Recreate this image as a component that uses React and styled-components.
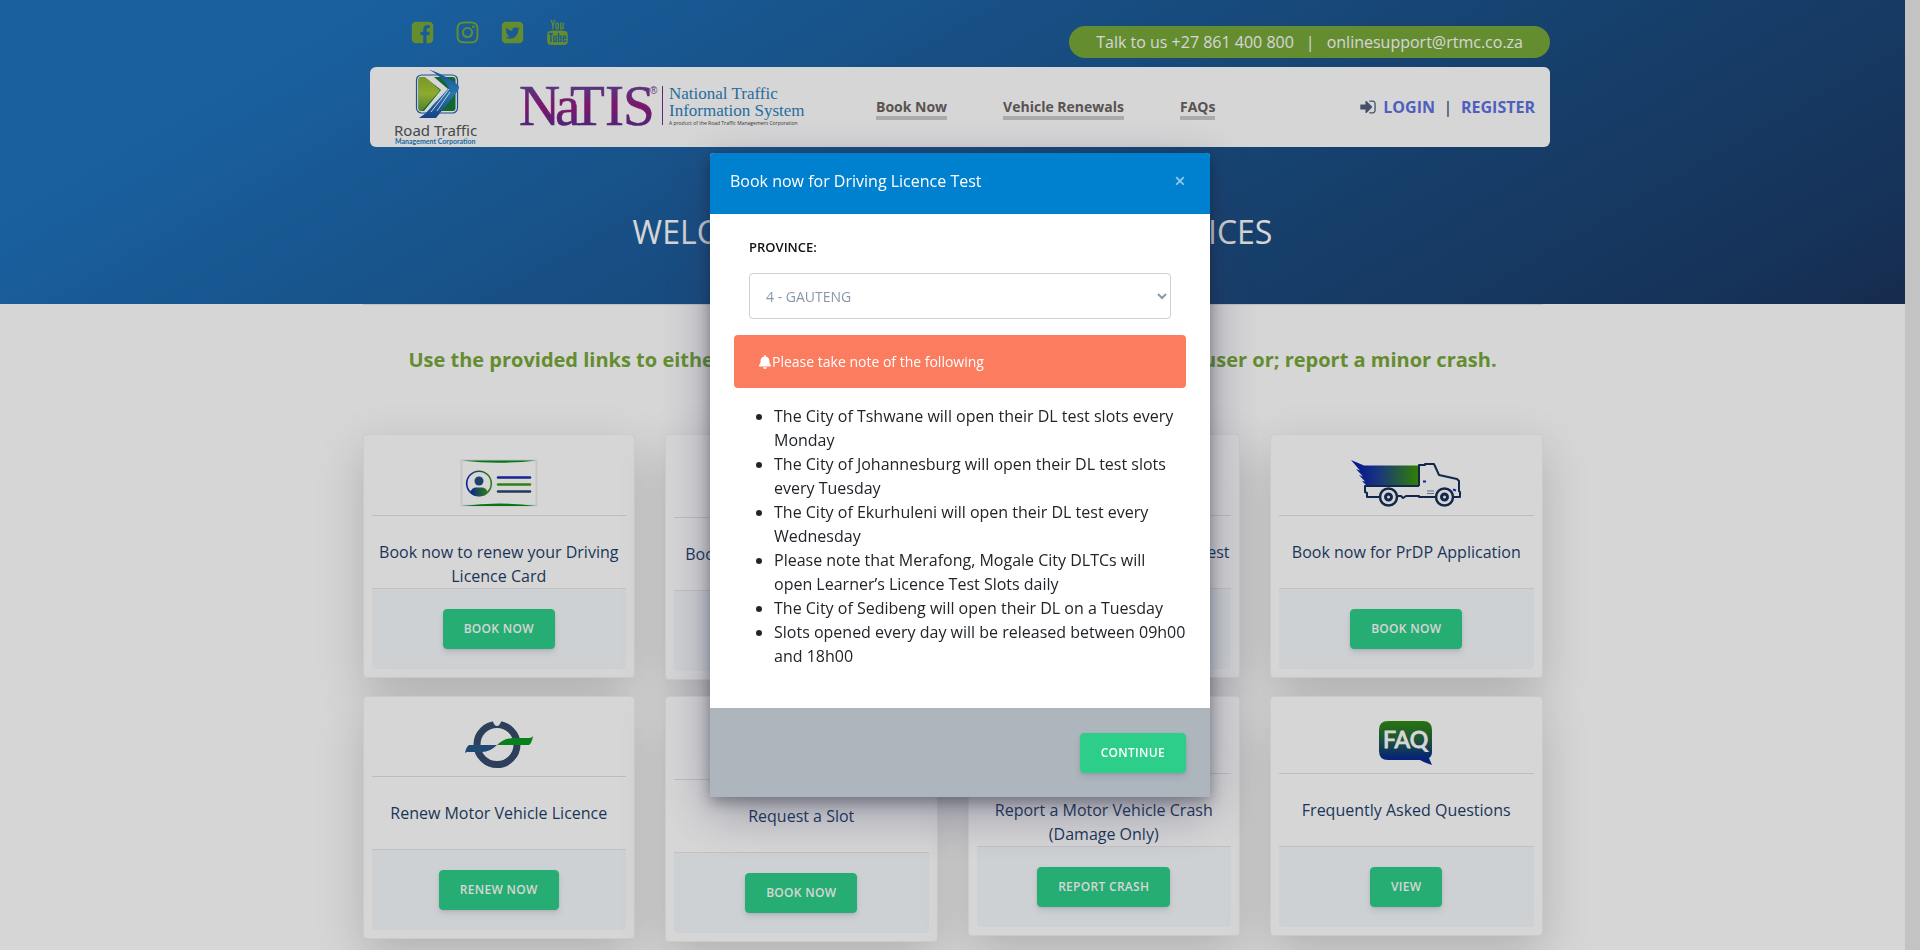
import React from "react";
import styled, { createGlobalStyle } from "styled-components";
import { FaInstagram, FaBell } from "react-icons/fa";
import { TfiYoutube } from "react-icons/tfi";

const GlobalStyle = createGlobalStyle`
  *, *::before, *::after { box-sizing: border-box; }
  body {
    margin: 0;
    overflow: hidden;
    background: #e9e9e9;
    font-family: "Open Sans", sans-serif;
    font-size: 16px;
    line-height: 24px;
    color: #525f7f;
  }
  button, select, input { font-family: inherit; }
`;

/* ---------- page ---------- */

const gutter = 15;

const Page = styled.div`
  height: 100vh;
  overflow: hidden;
  padding-right: ${gutter}px;
`;

const Sheet = styled.div`
  min-height: 100vh;
  background: #fff;
`;

const Hero = styled.header`
  height: 304px;
  background: linear-gradient(150deg, #1e73be 15%, #1b4b7f 70%, #1b3e6c 90%, #1b345d 100%);
`;

const HeaderWrap = styled.div`
  width: calc(100% + ${gutter}px);
`;

const HeaderInner = styled.div`
  max-width: 1180px;
  margin: 0 auto;
`;

const TopRow = styled.div`
  display: flex;
  justify-content: space-between;
  height: 67px;
  padding: 20px 0 0 40px;
`;

const SocialList = styled.nav`
  display: flex;
  gap: 20px;
  height: 25px;
`;

const SocialLink = styled.a`
  display: flex;
  color: #77a839;

  svg {
    width: 25px;
    height: 25px;
    fill: currentColor;
  }
`;

const ContactPill = styled.p`
  display: flex;
  align-items: center;
  gap: 12px;
  height: 32px;
  margin: 6px 0 0;
  padding: 0 27px;
  border-radius: 16px;
  background: #77a839;
  color: #fff;
`;

const NavBar = styled.div`
  display: flex;
  align-items: center;
  height: 80px;
  padding: 0 15px 0 22px;
  border-radius: 6px;
  background: #fff;
`;

const LogoLink = styled.a`
  display: flex;
  margin-right: ${(p) => p.$after}px;
`;

const NavLinks = styled.nav`
  display: flex;
  gap: 56px;
  padding-top: 4px;
`;

const NavLink = styled.a`
  border-bottom: 4px solid #cbcbcb;
  color: #6b6363;
  font-size: 14px;
  font-weight: 700;
  line-height: 18px;
  text-decoration: none;
`;

const Account = styled.div`
  display: flex;
  align-items: center;
  margin-left: auto;
  color: #525f7f;
  font-weight: 600;

  svg {
    width: 18px;
    height: 18px;
    margin-right: 6px;
    fill: currentColor;
  }
`;

const AccountLink = styled.a`
  color: #5e72e4;
  font-weight: 700;
  text-decoration: none;
`;

const Divider = styled.span`
  width: 26px;
  text-align: center;
`;

const HeroTitle = styled.h1`
  margin: 64px 0 0;
  color: #fff;
  font-size: 32px;
  font-weight: 400;
  line-height: 42px;
  text-align: center;
`;

const Container = styled.main`
  max-width: 1210px;
  margin: 0 auto;
  padding: 0 15px;
`;

const Intro = styled.h2`
  margin: 0 0 59px;
  padding-top: 40px;
  border-top: 1px solid #e4e4e4;
  color: #77a839;
  font-size: 20px;
  font-weight: 700;
  line-height: 30px;
  text-align: center;
  white-space: nowrap;
`;

const Grid = styled.div`
  display: grid;
  grid-template-columns: repeat(4, 1fr);
  align-items: start;
  gap: 16px 30px;
`;

const Card = styled.article`
  padding: 8px;
  border: 1px solid rgba(0, 0, 0, 0.05);
  border-radius: 4px;
  background: #fff;
  background-clip: border-box;
  box-shadow: 0 16px 48px rgba(0, 0, 0, 0.175);
  text-align: center;
`;

const CardIcon = styled.div`
  display: flex;
  justify-content: center;
  padding: 16px 0 8px;
  border-bottom: 1px solid #e2e2e2;
`;

const CardTitle = styled.h3`
  height: 72px;
  margin: 0;
  padding-top: 24px;
  color: #1f3f6b;
  font-size: 16px;
  font-weight: 400;
  line-height: 24px;
`;

const CardFooter = styled.div`
  padding: 20px;
  border-top: 1px solid #e6e6ea;
  border-radius: 0 0 4px 4px;
  background: #f6f9fc;
`;

const Button = styled.button`
  height: 40px;
  padding: 0 20px;
  border: 1px solid #2dce89;
  border-radius: 4px;
  background: #2dce89;
  box-shadow: 0 4px 6px rgba(50, 50, 93, 0.11), 0 1px 3px rgba(0, 0, 0, 0.08);
  color: #fff;
  font-size: 12px;
  font-weight: 600;
  line-height: 18px;
  letter-spacing: 0.025em;
  text-transform: uppercase;
  vertical-align: top;
`;

/* ---------- modal ---------- */

const Backdrop = styled.div`
  position: fixed;
  inset: 0;
  display: flex;
  align-items: center;
  justify-content: center;
  background: rgba(0, 0, 0, 0.16);
`;

const Modal = styled.section`
  width: 500px;
  max-width: 100%;
  border-radius: 4px 4px 0 0;
  background: #fff;
  box-shadow: 0 15px 50px rgba(50, 50, 93, 0.4), 0 5px 15px rgba(0, 0, 0, 0.35);
`;

const ModalHeader = styled.div`
  display: flex;
  align-items: flex-start;
  justify-content: space-between;
  height: 61px;
  padding: 16px 24px 0 20px;
  border-radius: 4px 4px 0 0;
  background: #0081cf;
`;

const ModalTitle = styled.h2`
  margin: 0;
  color: #fff;
  font-size: 16px;
  font-weight: 400;
  line-height: 24px;
`;

const CloseButton = styled.button`
  width: 12px;
  height: 24px;
  padding: 0;
  border: 0;
  background: none;
  color: #8cc8ec;
  font-size: 20px;
  font-weight: 600;
  line-height: 24px;
`;

const ModalBody = styled.div`
  padding: 24px;
`;

const Field = styled.div`
  margin-bottom: 16px;
  padding: 0 15px;
`;

const Label = styled.label`
  display: block;
  margin-bottom: 17px;
  color: #111;
  font-size: 13px;
  font-weight: 600;
  line-height: 18px;
`;

const Select = styled.select`
  display: block;
  width: 100%;
  height: 46px;
  padding: 10px 12px;
  border: 1px solid #cad1d7;
  border-radius: 4px;
  background: #fff;
  color: #8898aa;
  font-size: 14px;
`;

const Alert = styled.p`
  display: flex;
  align-items: center;
  height: 53px;
  margin: 0 0 16px;
  padding: 0 24px;
  border-radius: 4px;
  background: #fc7c5f;
  color: #fff;
  font-size: 14px;

  svg {
    width: 14px;
    height: 14px;
  }
`;

const Notes = styled.ul`
  margin: 0 0 16px;
  padding-left: 40px;
  color: #212529;
`;

const ModalFooter = styled.div`
  display: flex;
  justify-content: flex-end;
  padding: 24px;
  border-top: 1px solid #aab2ba;
  background: #adb5bd;
`;

/* ---------- drawings ---------- */

const FacebookIcon = () => (
  <svg viewBox="0 0 1792 1792" aria-hidden="true">
    <path d="M1376 128q119 0 203.5 84.5t84.5 203.5v960q0 119-84.5 203.5t-203.5 84.5h-188v-595h199l30-232h-229v-148q0-56 23.5-84t91.5-28l122-1v-207q-63-9-178-9-136 0-217.5 80t-81.5 226v171h-200v232h200v595h-532q-119 0-203.5-84.5t-84.5-203.5v-960q0-119 84.5-203.5t203.5-84.5h960z" />
  </svg>
);

const TwitterIcon = () => (
  <svg viewBox="0 0 1792 1792" aria-hidden="true">
    <path d="M1408 610q-56 25-121 34 68-40 93-117-65 38-134 51-61-66-153-66-87 0-148.5 61.5t-61.5 148.5q0 29 5 48-129-7-242-65t-192-155q-29 50-29 106 0 114 91 175-47-1-100-26v2q0 75 50 133.5t123 72.5q-29 8-51 8-13 0-39-4 21 63 74.5 104t121.5 42q-116 90-261 90-26 0-50-3 148 94 322 94 112 0 210-35.5t168-95 120.5-137 75-162 24.5-168.5q0-18-1-27 63-45 105-109zm256-194v960q0 119-84.5 203.5t-203.5 84.5h-960q-119 0-203.5-84.5t-84.5-203.5v-960q0-119 84.5-203.5t203.5-84.5h960q119 0 203.5 84.5t84.5 203.5z" />
  </svg>
);

const SignInIcon = () => (
  <svg viewBox="0 0 1792 1792" aria-hidden="true">
    <path d="M1312 896q0 26-19 45l-544 544q-19 19-45 19t-45-19-19-45v-288h-448q-26 0-45-19t-19-45v-384q0-26 19-45t45-19h448v-288q0-26 19-45t45-19 45 19l544 544q19 19 19 45zm352-352v704q0 119-84.5 203.5t-203.5 84.5h-320q-13 0-22.5-9.5t-9.5-22.5q0-4-1-20t-.5-26.5 3-23.5 10-19.5 20.5-6.5h320q66 0 113-47t47-113v-704q0-66-47-113t-113-47h-312l-11.5-1-11.5-3-8-5.5-7-9-2-13.5q0-4-1-20t-.5-26.5 3-23.5 10-19.5 20.5-6.5h320q119 0 203.5 84.5t84.5 203.5z" />
  </svg>
);

const RtmcLogo = () => (
  <svg width="90" height="78" viewBox="0 0 90 78" role="img" aria-label="Road Traffic Management Corporation">
    <defs>
      <linearGradient id="lime" x1="0" y1="0" x2="0" y2="1">
        <stop offset="0" stopColor="#8fb52f" />
        <stop offset="0.5" stopColor="#a9cc35" />
        <stop offset="1" stopColor="#5d9c3c" />
      </linearGradient>
      <linearGradient id="road" x1="0" y1="0" x2="0" y2="1">
        <stop offset="0" stopColor="#1d5fb4" />
        <stop offset="0.5" stopColor="#2f8fd0" />
        <stop offset="1" stopColor="#1c4fa0" />
      </linearGradient>
    </defs>
    <rect x="24.500" y="7" width="41" height="38" rx="5" fill="#fff" stroke="#2461ad" strokeWidth="1.200" />
    <rect x="26.500" y="9" width="37" height="34" rx="3" fill="#167a3c" />
    <path d="M29.500 9H34L48 22.500L30 43H29.500a3 3 0 0 1-3-3V12a3 3 0 0 1 3-3z" fill="url(#lime)" />
    <path d="M33 9L49 22L32 43H38L56 21L42 9z" fill="#fff" />
    <path d="M37 1.500Q50 6 58 11.500Q68 17 67 20Q66 23 61 29L44 50H27Q35 45 40 38L57 20Q51 9 37 1.500z" fill="url(#road)" />
    <path d="M57 21L39 44M58 24L45 43" stroke="#e8f2fa" strokeWidth="1" fill="none" />
    <text x="2" y="68" fill="#55565a" fontFamily="Noto Sans, sans-serif" fontSize="15">Road Traffic</text>
    <text x="3" y="76" fill="#1f7cc0" fontFamily="Lato, sans-serif" fontSize="7" fontWeight="700">Management Corporation</text>
  </svg>
);

const NatisLogo = () => (
  <svg width="288" height="44" viewBox="0 0 288 44" role="img" aria-label="NaTIS National Traffic Information System">
    <defs>
      <linearGradient id="natis" gradientUnits="userSpaceOnUse" x1="0" y1="2" x2="0" y2="41">
        <stop offset="0" stopColor="#6b3f96" />
        <stop offset="0.5" stopColor="#951a80" />
        <stop offset="1" stopColor="#5f2c90" />
      </linearGradient>
    </defs>
    <g fill="url(#natis)" stroke="url(#natis)" strokeWidth="0.600" fontFamily="Liberation Serif, serif" fontSize="57">
      <text x="-1" y="40">N</text>
      <text x="35" y="40">a</text>
      <text x="50" y="40">T</text>
      <text x="85" y="40">I</text>
      <text x="103" y="40">S</text>
    </g>
    <text x="130" y="9" fill="#6b3f96" fontFamily="Liberation Sans, sans-serif" fontSize="10">®</text>
    <path d="M142.500 1V40" stroke="#6f2f8f" strokeWidth="1" />
    <g fill="#2f82bd" fontFamily="Liberation Serif, serif" fontSize="17">
      <text x="149" y="14">National Traffic</text>
      <text x="149" y="31">Information System</text>
    </g>
    <text x="149" y="40" fill="#444" fontFamily="Open Sans, sans-serif" fontSize="5">A product of the Road Traffic Management Corporation</text>
  </svg>
);

const LicenceCardIcon = () => (
  <svg width="78" height="48" viewBox="0 0 78 48" aria-hidden="true">
    <defs>
      <linearGradient id="person" x1="0" x2="1">
        <stop offset="0" stopColor="#0f2ab0" />
        <stop offset="1" stopColor="#3a9a12" />
      </linearGradient>
    </defs>
    <rect x="1.500" y="1.500" width="75" height="45" fill="none" stroke="#ececec" strokeWidth="2" />
    <path d="M2 1.500H76Q39 6 2 1.500zM2 47H76Q39 42 2 47z" fill="#0a8c1c" />
    <circle cx="19" cy="24.500" r="12.300" fill="none" stroke="url(#person)" strokeWidth="1.600" />
    <circle cx="19" cy="22" r="4.500" fill="#1f4f80" />
    <path d="M10 33.500Q12 28.500 16 28.500H22Q26 28.500 28 33.500Q19 41 10 33.500z" fill="url(#person)" />
    <path d="M38 18.500H70" stroke="#1a2eb0" strokeWidth="2.500" strokeLinecap="round" />
    <path d="M38 25.500H70" stroke="#3a9a12" strokeWidth="2.500" strokeLinecap="round" />
    <path d="M38 32.500H70" stroke="#2c4370" strokeWidth="2.500" strokeLinecap="round" />
  </svg>
);

const TruckIcon = () => (
  <svg width="112" height="48" viewBox="0 0 112 48" aria-hidden="true">
    <defs>
      <linearGradient id="cargo" x1="0" x2="1">
        <stop offset="0.100" stopColor="#0a1fa8" />
        <stop offset="0.400" stopColor="#1f3f98" />
        <stop offset="1" stopColor="#3a9a00" />
      </linearGradient>
    </defs>
    <path d="M1 1L14 6.500H69V27H17L12 22L15 22.500L9 16L13 17.500L6 10L10 11.500z" fill="url(#cargo)" />
    <g fill="none" stroke="#172f5c" strokeWidth="2" strokeLinejoin="round">
      <path d="M69 27H15V33L17 34V38H29M48 37H51L53 39L56 37H69V38H85M69 27V6H75V5H84L89 16L107 20L109 22V32L110 33V38H104" />
      <circle cx="38.500" cy="38" r="8.500" strokeWidth="2.500" />
      <circle cx="38.500" cy="38" r="3" strokeWidth="3" />
      <circle cx="94.500" cy="38" r="8.500" strokeWidth="2.500" />
      <circle cx="94.500" cy="38" r="3" strokeWidth="3" />
    </g>
    <path d="M77 32H84M77 34.500H84" stroke="#6f7fb8" strokeWidth="1" />
    <path d="M73 22.500H76M103 30.500L106 31.500" stroke="#1a2eb0" strokeWidth="2" />
  </svg>
);

const RenewIcon = () => (
  <svg width="70" height="47" viewBox="0 0 70 47" aria-hidden="true">
    <circle cx="33" cy="23.500" r="20" fill="none" stroke="#374c6d" strokeWidth="7" />
    <path d="M28.500 -1Q30 5 33 5Q36 5 37.500 -1z" fill="#fff" />
    <path d="M1 32Q2 26 5 24H33Q26 31 18 31H3z" fill="#25598a" />
    <path d="M33 24Q40 17 50 17H65Q68 17 69 15Q68 22 65 24z" fill="#0b9a20" />
  </svg>
);

const FaqIcon = () => (
  <svg width="54" height="44" viewBox="0 0 54 44" aria-hidden="true">
    <defs>
      <linearGradient id="bubble" x1="0" y1="0" x2="0" y2="1">
        <stop offset="0" stopColor="#2f8c12" />
        <stop offset="0.450" stopColor="#226045" />
        <stop offset="0.850" stopColor="#082a90" />
      </linearGradient>
    </defs>
    <path d="M9 0H44Q53 0 53 9V31Q53 35 50 37L53 44Q46 42 41 39H9Q0 39 0 30V9Q0 0 9 0z" fill="url(#bubble)" />
    <text x="26.500" y="27" textAnchor="middle" fill="#fff" stroke="#fff" strokeWidth="1" fontFamily="Lato, sans-serif" fontSize="23" fontWeight="400">FAQ</text>
  </svg>
);

const DocumentIcon = ({ height }) => (
  <svg width="60" height={height} viewBox="0 0 60 48" aria-hidden="true">
    <path d="M12 4H48V44H12zM20 14H40M20 24H40M20 34H32" fill="none" stroke="#172f5c" strokeWidth="3" />
  </svg>
);

/* ---------- data ---------- */

const services = [
  { title: "Book now to renew your Driving Licence Card", action: "Book now", icon: <LicenceCardIcon /> },
  { title: "Book now for Learner’s Licence Test", action: "Book now", icon: <DocumentIcon height={50} /> },
  { title: "Book now for Driving Licence Test", action: "Book now", icon: <DocumentIcon height={48} /> },
  { title: "Book now for PrDP Application", action: "Book now", icon: <TruckIcon /> },
  { title: "Renew Motor Vehicle Licence", action: "Renew now", icon: <RenewIcon /> },
  { title: "Request a Slot", action: "Book now", icon: <DocumentIcon height={50} /> },
  { title: "Report a Motor Vehicle Crash (Damage Only)", action: "Report crash", icon: <DocumentIcon height={44} /> },
  { title: "Frequently Asked Questions", action: "View", icon: <FaqIcon /> },
];

const notes = [
  "The City of Tshwane will open their DL test slots every Monday",
  "The City of Johannesburg will open their DL test slots every Tuesday",
  "The City of Ekurhuleni will open their DL test every Wednesday",
  "Please note that Merafong, Mogale City DLTCs will open Learner’s Licence Test Slots daily",
  "The City of Sedibeng will open their DL on a Tuesday",
  "Slots opened every day will be released between 09h00 and 18h00",
];

const Header = () => (
  <Hero>
    <HeaderWrap>
      <HeaderInner>
        <TopRow>
          <SocialList aria-label="Social media">
            <SocialLink href="#facebook" aria-label="Facebook"><FacebookIcon /></SocialLink>
            <SocialLink href="#instagram" aria-label="Instagram"><FaInstagram /></SocialLink>
            <SocialLink href="#twitter" aria-label="Twitter"><TwitterIcon /></SocialLink>
            <SocialLink href="#youtube" aria-label="YouTube"><TfiYoutube /></SocialLink>
          </SocialList>
          <ContactPill>
            <span>Talk to us +27 861 400 800</span>
            <span>|</span>
            <span>onlinesupport@rtmc.co.za</span>
          </ContactPill>
        </TopRow>
        <NavBar>
          <LogoLink href="#home" $after={38}><RtmcLogo /></LogoLink>
          <LogoLink href="#natis" $after={68}><NatisLogo /></LogoLink>
          <NavLinks>
            <NavLink href="#book">Book Now</NavLink>
            <NavLink href="#renewals">Vehicle Renewals</NavLink>
            <NavLink href="#faqs">FAQs</NavLink>
          </NavLinks>
          <Account>
            <SignInIcon />
            <AccountLink href="#login">LOGIN</AccountLink>
            <Divider>|</Divider>
            <AccountLink href="#register">REGISTER</AccountLink>
          </Account>
        </NavBar>
      </HeaderInner>
    </HeaderWrap>
    <HeroTitle>WELCOME TO THE NaTIS ONLINE SERVICES</HeroTitle>
  </Hero>
);

const BookingModal = () => (
  <Backdrop>
    <Modal role="dialog" aria-modal="true" aria-labelledby="modal-title">
      <ModalHeader>
        <ModalTitle id="modal-title">Book now for Driving Licence Test</ModalTitle>
        <CloseButton type="button" aria-label="Close">×</CloseButton>
      </ModalHeader>
      <ModalBody>
        <Field>
          <Label htmlFor="province">PROVINCE:</Label>
          <Select id="province" defaultValue="4">
            <option value="4">4 - GAUTENG</option>
          </Select>
        </Field>
        <Alert><FaBell aria-hidden="true" />Please take note of the following</Alert>
        <Notes>
          {notes.map((note) => <li key={note}>{note}</li>)}
        </Notes>
      </ModalBody>
      <ModalFooter>
        <Button type="button">Continue</Button>
      </ModalFooter>
    </Modal>
  </Backdrop>
);

export default function App() {
  return (
    <>
      <GlobalStyle />
      <Page>
        <Sheet>
          <Header />
          <Container>
            <Intro>
              Use the provided links to either book slots; renew vehicle licences; register as a user or; report a minor crash.
            </Intro>
            <Grid>
              {services.map((service) => (
                <Card key={service.title}>
                  <CardIcon>{service.icon}</CardIcon>
                  <CardTitle>{service.title}</CardTitle>
                  <CardFooter>
                    <Button type="button">{service.action}</Button>
                  </CardFooter>
                </Card>
              ))}
            </Grid>
          </Container>
        </Sheet>
      </Page>
      <BookingModal />
    </>
  );
}
